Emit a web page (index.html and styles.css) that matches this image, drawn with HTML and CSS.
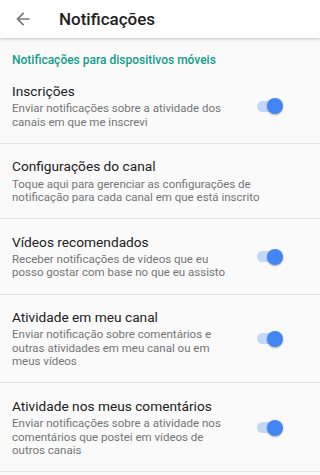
FILE: index.html
```html
<!DOCTYPE html>
<html lang="pt-BR">
<head>
<meta charset="utf-8">
<title>Notificações</title>
<link rel="stylesheet" href="styles.css">
</head>
<body>
<div class="page">
<header class="appbar">
  <div class="bar-inner">
    <span class="back">
      <svg width="20" height="20" viewBox="0 0 24 24"><path d="M20 11H7.83l5.59-5.59L12 4l-8 8 8 8 1.41-1.41L7.83 13H20v-2z" fill="#7a7a7a"/></svg>
    </span>
    <h1 class="title">Notificações</h1>
  </div>
</header>
<main class="content">
  <div class="section-head">Notificações para dispositivos móveis</div>
  <div class="item">
    <div class="row">
      <div class="text">
        <div class="item-title">Inscrições</div>
        <div class="item-sub">Enviar notificações sobre a atividade dos<br>canais em que me inscrevi</div>
      </div>
      <span class="toggle"><span class="track"></span><span class="thumb"></span></span>
    </div>
  </div>
  <div class="item">
    <div class="row">
      <div class="text">
        <div class="item-title">Configurações do canal</div>
        <div class="item-sub">Toque aqui para gerenciar as configurações de<br>notificação para cada canal em que está inscrito</div>
      </div>
    </div>
  </div>
  <div class="item">
    <div class="row">
      <div class="text">
        <div class="item-title">Vídeos recomendados</div>
        <div class="item-sub">Receber notificações de vídeos que eu<br>posso gostar com base no que eu assisto</div>
      </div>
      <span class="toggle"><span class="track"></span><span class="thumb"></span></span>
    </div>
  </div>
  <div class="item">
    <div class="row">
      <div class="text">
        <div class="item-title">Atividade em meu canal</div>
        <div class="item-sub">Enviar notificação sobre comentários e<br>outras atividades em meu canal ou em<br>meus vídeos</div>
      </div>
      <span class="toggle"><span class="track"></span><span class="thumb"></span></span>
    </div>
  </div>
  <div class="item">
    <div class="row">
      <div class="text">
        <div class="item-title">Atividade nos meus comentários</div>
        <div class="item-sub">Enviar notificações sobre a atividade nos<br>comentários que postei em vídeos de<br>outros canais</div>
      </div>
      <span class="toggle"><span class="track"></span><span class="thumb"></span></span>
    </div>
  </div>
</main>
</div>
</body>
</html>
```
FILE: styles.css
```css
html, body {
  margin: 0;
  padding: 0;
  background: #fafafa;
}
.page {
  width: 100%;
  min-width: 300px;
  height: 475px;
  overflow: hidden;
  font-family: Roboto, "Liberation Sans", sans-serif;
  color: #212121;
}
.appbar {
  height: 38px;
  background: #ffffff;
  box-shadow: 0 1px 3px rgba(0,0,0,0.22);
  position: relative;
  z-index: 1;
}
.bar-inner {
  width: 300px;
  height: 100%;
  display: flex;
  align-items: center;
}
.back {
  width: 20px;
  height: 20px;
  margin-left: 13px;
  display: flex;
}
.title {
  margin: 0 0 0 26px;
  font-size: 17px;
  font-weight: 500;
  color: #212121;
  line-height: 20px;
}
.content {
  display: flex;
  flex-direction: column;
}
.section-head {
  padding: 13.7px 12px 0.8px;
  font-size: 12px;
  line-height: 16px;
  font-weight: 500;
  color: #129c89;
}
.item {
  padding: 14.5px 0 13.7px;
  border-bottom: 1px solid #e4e4e4;
}
.row {
  width: 300px;
  box-sizing: border-box;
  padding: 0 12px;
  display: flex;
  align-items: center;
}
.text {
  white-space: nowrap;
}
.item-title {
  font-size: 13.7px;
  line-height: 17px;
  color: #212121;
}
.item-sub {
  margin-top: 2.2px;
  font-size: 11.5px;
  line-height: 13.5px;
  color: #757575;
}
.toggle {
  margin-left: auto;
  margin-right: 5.5px;
  width: 26px;
  height: 16px;
  position: relative;
  flex: none;
}
.track {
  position: absolute;
  left: 0;
  top: 2.5px;
  width: 24px;
  height: 11px;
  border-radius: 6px;
  background: #c4d7f8;
}
.thumb {
  position: absolute;
  right: 0;
  top: 0;
  width: 16px;
  height: 16px;
  border-radius: 50%;
  background: #4285f4;
  box-shadow: 0 1px 2px rgba(0,0,0,0.3);
}
```
